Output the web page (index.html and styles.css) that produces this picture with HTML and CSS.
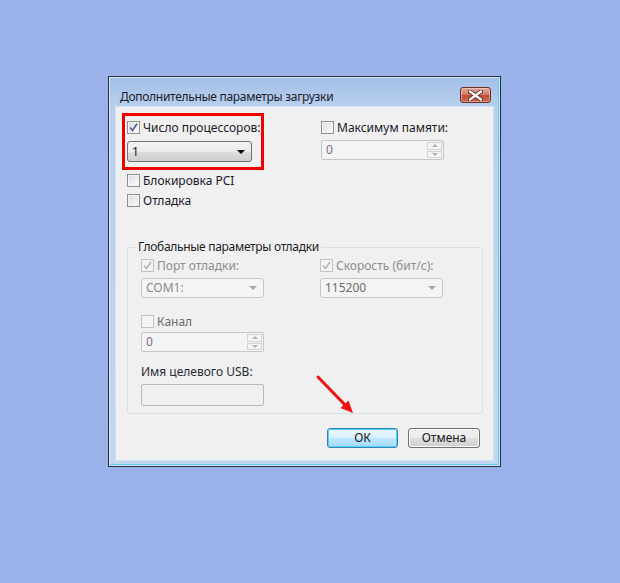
FILE: index.html
```html
<!DOCTYPE html>
<html lang="ru">
<head>
<meta charset="utf-8">
<link rel="stylesheet" href="styles.css">
</head>
<body>
<div class="desk">
  <div class="window">
    <div class="titlebar">
      <span class="title">Дополнительные параметры загрузки</span>
      <div class="close">
        <svg width="15" height="11" viewBox="0 0 15 11"><path d="M2 1.5 L13 9.5 M13 1.5 L2 9.5" stroke="#5a2a22" stroke-width="4.2" stroke-linecap="round"/><path d="M2 1.5 L13 9.5 M13 1.5 L2 9.5" stroke="#fff" stroke-width="2.4" stroke-linecap="round"/></svg>
      </div>
    </div>
    <div class="client">
      <div class="top">
        <div class="col-left">
          <div class="hl">
            <label class="chk"><span class="box"><svg width="9" height="9" viewBox="0 0 9 9"><path d="M1 4.5 L3.5 7.5 L8 0.8" fill="none" stroke="#4a5e92" stroke-width="1.6"/></svg></span><span class="lbl">Число процессоров:</span></label>
            <div class="select sel-on"><span class="val">1</span><span class="tri"></span></div>
          </div>
          <label class="chk row-pci"><span class="box"></span><span class="lbl">Блокировка PCI</span></label>
          <label class="chk row-dbg"><span class="box"></span><span class="lbl">Отладка</span></label>
        </div>
        <div class="col-right">
          <label class="chk"><span class="box"></span><span class="lbl">Максимум памяти:</span></label>
          <div class="spin mem"><span class="val dim">0</span><span class="btns"><span class="sb"><i class="up"></i></span><span class="sb"><i class="dn"></i></span></span></div>
        </div>
      </div>
      <fieldset class="group">
        <legend>Глобальные параметры отладки</legend>
        <div class="ggrid">
          <label class="chk off"><span class="box"><svg width="9" height="9" viewBox="0 0 9 9"><path d="M1 4.5 L3.5 7.5 L8 0.8" fill="none" stroke="#b4b4b4" stroke-width="1.6"/></svg></span><span class="lbl">Порт отладки:</span></label>
          <label class="chk off"><span class="box"><svg width="9" height="9" viewBox="0 0 9 9"><path d="M1 4.5 L3.5 7.5 L8 0.8" fill="none" stroke="#b4b4b4" stroke-width="1.6"/></svg></span><span class="lbl">Скорость (бит/с):</span></label>
          <div class="select sel-off r2"><span class="val">COM1:</span><span class="tri"></span></div>
          <div class="select sel-off r2"><span class="val v2">115200</span><span class="tri"></span></div>
          <label class="chk off canal"><span class="box"></span><span class="lbl">Канал</span></label>
          <div class="spin r4"><span class="val dim">0</span><span class="btns"><span class="sb"><i class="up"></i></span><span class="sb"><i class="dn"></i></span></span></div>
          <div class="usb-lbl">Имя целевого USB:</div>
          <div class="usb-in"></div>
        </div>
      </fieldset>
      <div class="buttons">
        <button class="btn ok">ОК</button>
        <button class="btn">Отмена</button>
      </div>
    </div>
  </div>
  <svg class="arrow" width="620" height="583" viewBox="0 0 620 583">
    <line x1="318" y1="377" x2="346" y2="406" stroke="#f01010" stroke-width="3" stroke-linecap="round"/>
    <polygon points="353,413 340.5,408 348.5,400.5" fill="#f01010"/>
  </svg>
</div>
</body>
</html>
```

FILE: styles.css
```css
* { box-sizing: border-box; }
body {
  margin: 0;
  background: #9ab1ea;
  font-family: "Noto Sans", "Open Sans", sans-serif;
  font-size: 12px;
  color: #1a1a1a;
}
.desk {
  position: relative;
  width: 620px;
  height: 583px;
  padding: 76px 0 0 108px;
  overflow: hidden;
}
.window {
  width: 393px;
  height: 391px;
  border: 1px solid #26313e;
  background: linear-gradient(180deg, #a3bfe6 0%, #b8d0ee 30px, #c1d7f1 100%);
  box-shadow: inset 0 0 0 1px #d6e6f7, inset -1px -1px 0 1px #5fd0ec;
  display: flex;
  flex-direction: column;
}
.titlebar {
  height: 30px;
  display: flex;
  justify-content: space-between;
  align-items: flex-start;
}
.title {
  padding: 12px 0 0 11px;
  line-height: 16px;
  color: #1b1b2b;
  letter-spacing: -0.3px;
}
.close {
  margin: 10px 9px 0 0;
  width: 31px;
  height: 16px;
  border: 1px solid #6e2f25;
  border-radius: 3px;
  background: linear-gradient(180deg, #e4a595 0%, #d4826f 45%, #c0503a 52%, #cc6650 100%);
  display: flex;
  align-items: center;
  justify-content: center;
  box-shadow: inset 0 0 0 1px rgba(255,255,255,0.35);
}
.client {
  flex: 1;
  margin: 0 7px 6px 7px;
  background: #f0f0f0;
  box-shadow: 0 0 0 1px #d3e2f3;
  padding: 6px 13px 0 6px;
  display: flex;
  flex-direction: column;
}
.top { display: flex; }
.col-left { width: 199px; }
.hl {
  width: 142px;
  height: 57px;
  border: 3px solid #f20000;
  padding: 5px 0 0 2px;
}
.chk {
  display: flex;
  align-items: center;
  height: 13px;
  gap: 3px;
  white-space: nowrap;
}
.box {
  width: 13px;
  height: 13px;
  flex: none;
  border: 1px solid #8e8f8f;
  background: linear-gradient(135deg, #dcdcdc, #fdfdfd);
  box-shadow: inset 0 0 0 1px #f4f4f4;
  display: flex;
  align-items: center;
  justify-content: center;
}
.lbl { line-height: 16px; color: #1a1a2a; }
.chk.off .box { border-color: #c2c2c2; background: #f4f4f4; box-shadow: none; }
.chk.off .lbl { color: #8d8d8d; }
.chk.canal .lbl { color: #6a6a6a; }
.row-pci { margin: 4px 0 0 5px; }
.row-dbg { margin: 7px 0 0 5px; }

.select {
  display: flex;
  align-items: center;
  justify-content: space-between;
  border-radius: 3px;
  padding: 0 6px 0 4px;
}
.sel-on {
  margin-top: 7px;
  width: 125px;
  height: 21px;
  border: 1px solid #707070;
  background: linear-gradient(180deg, #f3f3f3 0%, #ebebeb 50%, #dddddd 51%, #cfcfcf 100%);
}
.sel-on .tri {
  border-left: 4px solid transparent;
  border-right: 4px solid transparent;
  border-top: 4px solid #000;
}
.sel-off {
  width: 123px;
  height: 20px;
  border: 1px solid #c6c6c6;
  background: #f4f4f4;
}
.sel-off .val { color: #8a8a8a; }
.sel-off .v2 { color: #6d6d6d; }
.sel-off .tri {
  border-left: 4px solid transparent;
  border-right: 4px solid transparent;
  border-top: 4px solid #a8a8a8;
}
.val { line-height: 16px; }

.col-right { padding-top: 8px; }
.spin {
  width: 123px;
  height: 20px;
  border: 1px solid #c6c6c6;
  background: #f4f4f4;
  display: flex;
  align-items: center;
  justify-content: space-between;
  padding-left: 4px;
  border-radius: 2px;
}
.spin.mem { margin-top: 6px; }
.dim { color: #7c6f8a; }
.btns {
  display: flex;
  flex-direction: column;
  height: 100%;
  padding: 1px 1px 1px 0;
  gap: 1px;
}
.sb {
  width: 15px;
  flex: 1;
  border: 1px solid #d4d4d4;
  background: #f4f4f4;
  display: flex;
  align-items: center;
  justify-content: center;
}
.sb i { width: 0; height: 0; border-left: 3px solid transparent; border-right: 3px solid transparent; }
.sb .up { border-bottom: 3px solid #b0b0b0; }
.sb .dn { border-top: 3px solid #b0b0b0; }

.group {
  margin: 32px 0 0 5px;
  width: 356px;
  height: 175px;
  border: 1px solid #d5dfe5;
  border-radius: 3px;
  padding: 4px 0 0 13px;
  min-width: 0;
}
.group legend {
  padding: 0 2px;
  margin-left: -5px;
  line-height: 16px;
  color: #1e1e1e;
  letter-spacing: -0.3px;
}
.ggrid {
  display: grid;
  grid-template-columns: 179px 124px;
  align-items: start;
}
.r2 { margin-top: 6px; }
.canal { margin-top: 17px; }
.r4 { margin-top: 4px; grid-column: 1; }
.usb-lbl {
  grid-column: 1;
  margin-top: 12px;
  line-height: 16px;
  color: #2a2a3a;
}
.usb-in {
  grid-column: 1;
  margin-top: 4px;
  width: 123px;
  height: 22px;
  border: 1px solid #b9b9b9;
  border-radius: 2px;
  background: #f0f0f0;
}
.buttons {
  display: flex;
  justify-content: flex-end;
  gap: 10px;
  margin-top: 14px;
}
.btn {
  width: 72px;
  height: 20px;
  font-family: inherit;
  font-size: 12px;
  color: #1a1a1a;
  border: 1px solid #707070;
  border-radius: 3px;
  background: linear-gradient(180deg, #f2f2f2 0%, #ebebeb 50%, #dddddd 51%, #cfcfcf 100%);
  box-shadow: inset 0 0 0 1px #fbfbfb;
  padding: 0;
  line-height: 16px;
}
.btn.ok {
  width: 71px;
  border-color: #3c7fb1;
  background: linear-gradient(180deg, #eaf6fd 0%, #d9f0fc 50%, #bee6fd 51%, #a7d9f5 100%);
  box-shadow: inset 0 0 0 1px #48d7fb;
}
.arrow {
  position: absolute;
  left: 0;
  top: 0;
  pointer-events: none;
}
```
